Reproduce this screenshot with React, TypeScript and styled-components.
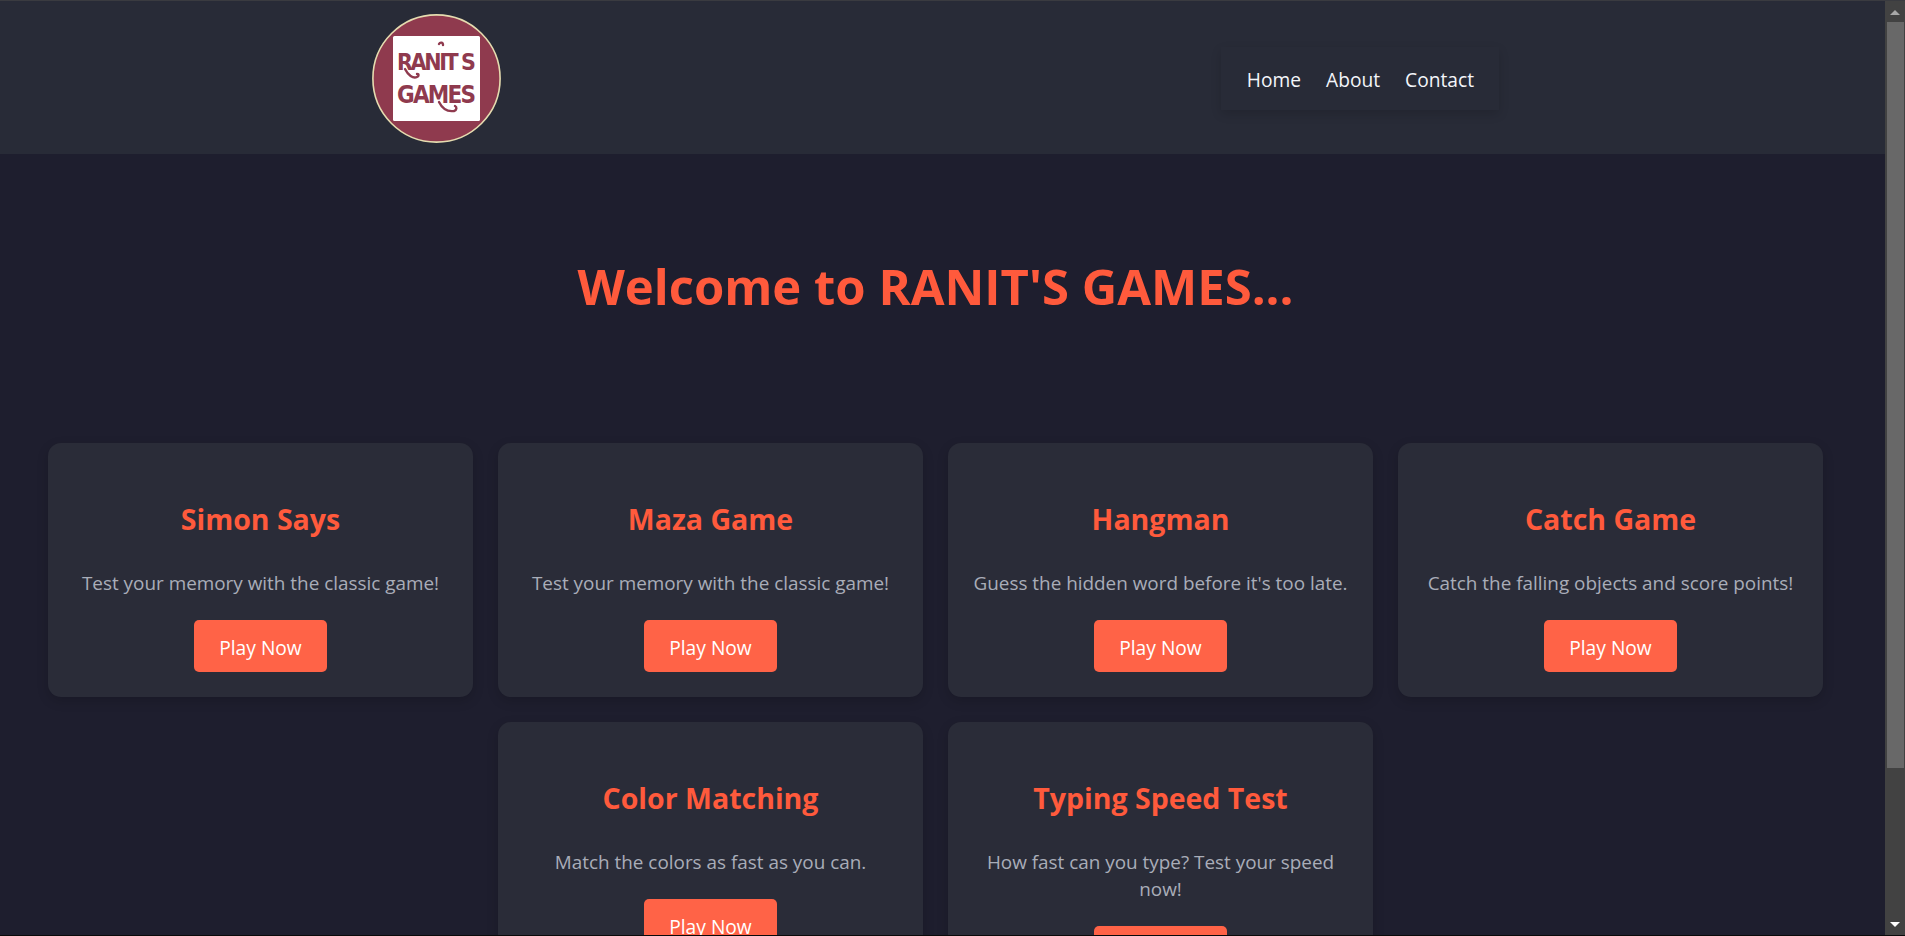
import React from 'react';
import styled, { createGlobalStyle } from 'styled-components';

const GlobalStyle = createGlobalStyle`
  body {
    margin: 0;
    background: #1e1e2e;
    font-family: "Open Sans", "Noto Sans", sans-serif;
    color: #fff;
  }
`;

const Header = styled.header`
  display: flex;
  align-items: center;
  justify-content: space-between;
  box-sizing: border-box;
  height: 154px;
  padding: 0 406px 0 372px;
  background: #282b37;
  border-top: 1px solid #3a3b40;
`;

const LogoBadge = styled.svg`
  display: block;
  width: 130px;
  height: 130px;
  margin-top: 2px;
`;

const Nav = styled.nav`
  display: flex;
  gap: 25px;
  margin-top: 2px;
  padding: 19px 25px 17px 26px;
  background: #282b37;
  box-shadow: 0 4px 10px rgba(0, 0, 0, 0.14);
`;

const NavLink = styled.a`
  font-size: 19.2px;
  line-height: 27px;
  color: #f4f6fa;
  text-decoration: none;
`;

const Main = styled.main`
  width: 1871px;
  padding-bottom: 121px;
`;

const Title = styled.h1`
  margin: 0;
  padding: 100px 0 125px;
  font-size: 49px;
  line-height: 64px;
  font-weight: 700;
  text-align: center;
  color: #ff5a3c;
`;

const CardGrid = styled.section`
  display: flex;
  flex-wrap: wrap;
  justify-content: center;
  gap: 25px;
`;

const Card = styled.article`
  display: flex;
  flex-direction: column;
  align-items: center;
  box-sizing: border-box;
  width: 425px;
  padding: 25px;
  background: #2a2c38;
  border-radius: 13px;
  box-shadow: 0 4px 12px rgba(0, 0, 0, 0.16);
`;

const CardTitle = styled.h2`
  margin: 32px 0 0;
  font-size: 28.5px;
  line-height: 38px;
  font-weight: 700;
  color: #ff5a3c;
`;

const CardText = styled.p`
  margin: 32px 0 0;
  font-size: 18.9px;
  line-height: 27px;
  text-align: center;
  color: #a9adb8;
`;

const PlayButton = styled.button`
  margin-top: 23px;
  width: 133px;
  height: 52px;
  padding: 2px 0 0;
  border: none;
  border-radius: 5px;
  background: #ff6347;
  font-family: inherit;
  font-size: 19.2px;
  color: #fff;
`;

// the reference shows the browser's classic scrollbar
const ScrollTrack = styled.div`
  position: fixed;
  top: 0;
  right: 0;
  bottom: 0;
  display: flex;
  flex-direction: column;
  align-items: center;
  width: 20px;
  background: #424242;
  border-top: 1px solid #3a3b40;
  box-sizing: border-box;
`;

const ScrollArrow = styled.div<{ $down?: boolean }>`
  width: 0;
  height: 0;
  border-left: 5px solid transparent;
  border-right: 5px solid transparent;
  ${(p) =>
    p.$down
      ? 'margin-top: 154px; border-top: 5px solid #fff;'
      : 'margin-top: 9px; border-bottom: 5px solid #a8a8a8;'}
`;

const ScrollThumb = styled.div`
  width: 17px;
  height: 746px;
  margin: 7px 0 0 1px;
  background: #686868;
`;

const BottomEdge = styled.div`
  position: fixed;
  left: 0;
  right: 0;
  bottom: 0;
  height: 1px;
  background: #0a0a0a;
`;

const games = [
  { name: 'Simon Says', text: 'Test your memory with the classic game!' },
  { name: 'Maza Game', text: 'Test your memory with the classic game!' },
  { name: 'Hangman', text: "Guess the hidden word before it's too late." },
  { name: 'Catch Game', text: 'Catch the falling objects and score points!' },
  { name: 'Color Matching', text: 'Match the colors as fast as you can.' },
  { name: 'Typing Speed Test', text: 'How fast can you type? Test your speed now!' },
];

const Logo: React.FC = () => (
  <LogoBadge viewBox="0 0 130 130" role="img" aria-label="Ranit's Games logo">
    <circle cx="64.5" cy="64.5" r="63.6" fill="#8f3a4e" stroke="#e6dcb0" strokeWidth="1.6" />
    <rect x="21" y="22" width="87" height="85" rx="1.5" fill="#fff" />
    <g
      fontFamily="'DejaVu Sans Condensed', 'DejaVu Sans', sans-serif"
      fontWeight="700"
      fill="#8f3a4e"
    >
      <text x="25" y="56" textLength="79" lengthAdjust="spacing" fontSize="23">
        RANIT S
      </text>
      <text x="25" y="89" textLength="79" lengthAdjust="spacing" fontSize="24">
        GAMES
      </text>
    </g>
    <g fill="none" stroke="#8f3a4e" strokeWidth="2.4" strokeLinecap="round">
      <path d="M33 55c3 6 8 10 12 8 2-1 2-3 0-3" />
      <path d="M67 30c1-2 4-2 4 1" />
      <path d="M67 88c3 6 8 10 15 9 3-1 3-4 1-5" />
    </g>
  </LogoBadge>
);

const App: React.FC = () => (
  <>
    <GlobalStyle />
    <Header>
      <Logo />
      <Nav>
        <NavLink href="#">Home</NavLink>
        <NavLink href="#">About</NavLink>
        <NavLink href="#">Contact</NavLink>
      </Nav>
    </Header>
    <Main>
      <Title>Welcome to RANIT'S GAMES...</Title>
      <CardGrid>
        {games.map((game) => (
          <Card key={game.name}>
            <CardTitle>{game.name}</CardTitle>
            <CardText>{game.text}</CardText>
            <PlayButton>Play Now</PlayButton>
          </Card>
        ))}
      </CardGrid>
    </Main>
    <ScrollTrack>
      <ScrollArrow />
      <ScrollThumb />
      <ScrollArrow $down />
    </ScrollTrack>
    <BottomEdge />
  </>
);

export default App;
